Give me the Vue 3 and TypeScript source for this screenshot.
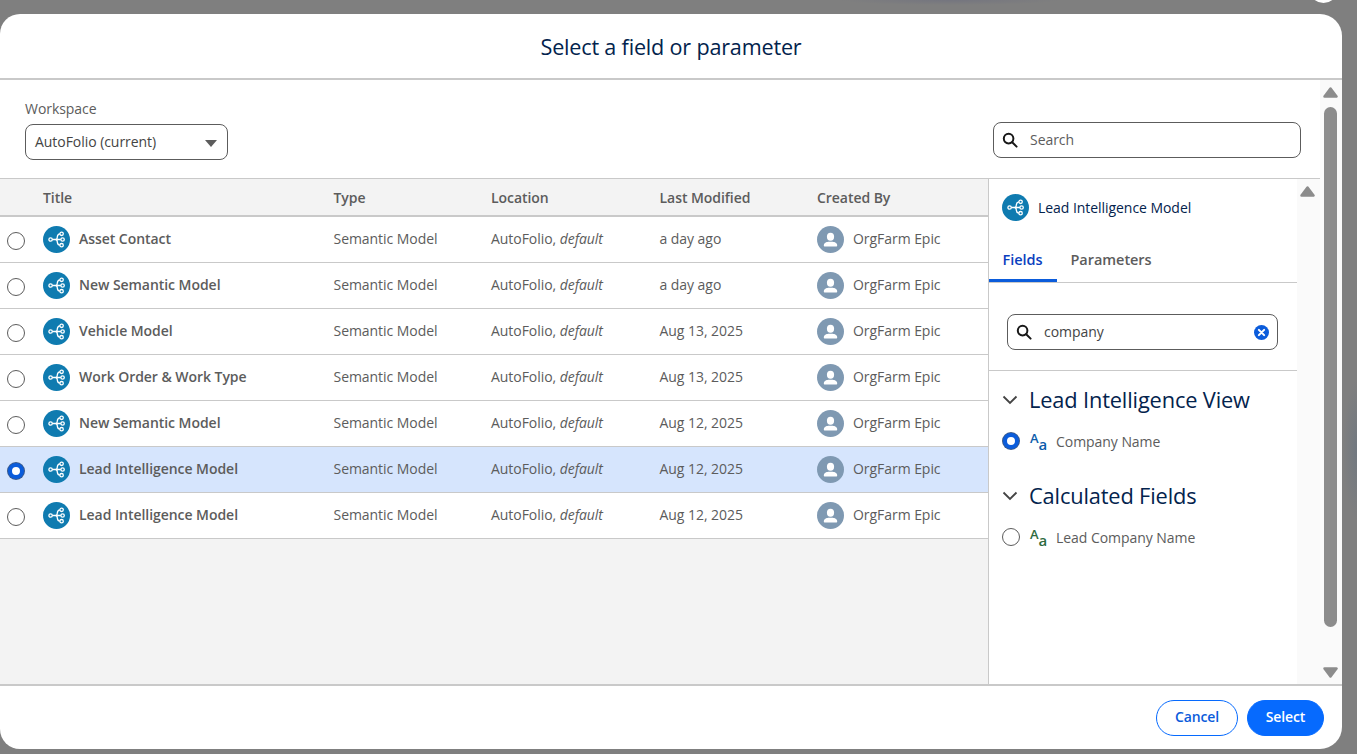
<template>
  <div class="page">
    <span class="close-peek"></span>
    <div class="modal">
      <header class="modal__header">Select a field or parameter</header>

      <div class="modal__body">
        <div class="modal__content">
          <div class="toolbar">
            <div class="workspace">
              <div class="workspace__label">Workspace</div>
              <div class="select">
                <span>AutoFolio (current)</span>
                <span class="select__caret"></span>
              </div>
            </div>
            <div class="search search--top">
              <svg class="search__icon" viewBox="0 0 16 16">
                <circle cx="6.6" cy="6.6" r="4.8" />
                <path d="M10.2 10.2 14.6 14.6" />
              </svg>
              <span class="search__placeholder">Search</span>
            </div>
          </div>

          <div class="split">
            <div class="table">
              <div class="row row--head">
                <div class="cell cell--radio"></div>
                <div class="cell cell--title">Title</div>
                <div class="cell cell--type">Type</div>
                <div class="cell cell--location">Location</div>
                <div class="cell cell--modified">Last Modified</div>
                <div class="cell">Created By</div>
              </div>
              <div
                v-for="item in items"
                :key="item.id"
                class="row"
                :class="{ 'row--selected': item.id === selectedId }"
              >
                <div class="cell cell--radio">
                  <span class="radio" :class="{ 'radio--on': item.id === selectedId }"></span>
                </div>
                <div class="cell cell--title">
                  <svg class="model-icon" viewBox="0 0 27 27">
                    <circle cx="13.5" cy="13.5" r="13.5" fill="#0f7bb0" />
                    <g fill="none" stroke="#fff" stroke-width="1.3">
                      <circle cx="7.6" cy="13.5" r="1.7" />
                      <circle cx="18.6" cy="7.8" r="1.7" />
                      <circle cx="19.6" cy="13.5" r="1.7" />
                      <circle cx="18.6" cy="19.2" r="1.7" />
                      <path d="M9.3 13.5h8.6M16.9 7.8c-2.6.4-2.4 2.2-2.6 3.4-.1 1-.3 2.3-1.9 2.3 1.6 0 1.8 1.3 1.9 2.3.2 1.2 0 3 2.6 3.4" />
                    </g>
                  </svg>
                  <span class="title-text">{{ item.title }}</span>
                </div>
                <div class="cell cell--type">Semantic Model</div>
                <div class="cell cell--location">AutoFolio,&nbsp;<em>default</em></div>
                <div class="cell cell--modified">{{ item.modified }}</div>
                <div class="cell">
                  <svg class="avatar" viewBox="0 0 27 27">
                    <circle cx="13.5" cy="13.5" r="13.5" fill="#7f99b2" />
                    <ellipse cx="13.5" cy="10.8" rx="3.6" ry="4" fill="#fff" />
                    <path d="M6.8 19.5c0-2.6 2.8-3.4 4.4-3.7h4.6c1.6.3 4.4 1.1 4.4 3.7 0 .6-.4 1-1 1H7.8c-.6 0-1-.4-1-1z" fill="#fff" />
                  </svg>
                  <span>OrgFarm Epic</span>
                </div>
              </div>
            </div>

            <aside class="panel">
              <div class="panel__main">
                <div class="panel__title">
                  <svg class="model-icon" viewBox="0 0 27 27">
                    <circle cx="13.5" cy="13.5" r="13.5" fill="#0f7bb0" />
                    <g fill="none" stroke="#fff" stroke-width="1.3">
                      <circle cx="7.6" cy="13.5" r="1.7" />
                      <circle cx="18.6" cy="7.8" r="1.7" />
                      <circle cx="19.6" cy="13.5" r="1.7" />
                      <circle cx="18.6" cy="19.2" r="1.7" />
                      <path d="M9.3 13.5h8.6M16.9 7.8c-2.6.4-2.4 2.2-2.6 3.4-.1 1-.3 2.3-1.9 2.3 1.6 0 1.8 1.3 1.9 2.3.2 1.2 0 3 2.6 3.4" />
                    </g>
                  </svg>
                  <span>Lead Intelligence Model</span>
                </div>
                <div class="tabs">
                  <div class="tab tab--active">Fields</div>
                  <div class="tab">Parameters</div>
                </div>
                <div class="panel__search">
                  <div class="search search--panel">
                    <svg class="search__icon" viewBox="0 0 16 16">
                      <circle cx="6.6" cy="6.6" r="4.8" />
                      <path d="M10.2 10.2 14.6 14.6" />
                    </svg>
                    <span class="search__value">company</span>
                    <svg class="search__clear" viewBox="0 0 16 16">
                      <circle cx="8" cy="8" r="8" fill="#0b5cdb" />
                      <path d="M5.2 5.2 10.8 10.8M10.8 5.2 5.2 10.8" stroke="#fff" stroke-width="2.2" stroke-linecap="round" />
                    </svg>
                  </div>
                </div>
                <section v-for="group in groups" :key="group.name" class="group">
                  <h3 class="group__name">
                    <svg class="group__chevron" viewBox="0 0 16 10">
                      <path d="M1.5 1.5 8 8l6.5-6.5" />
                    </svg>
                    {{ group.name }}
                  </h3>
                  <div class="field">
                    <span class="radio" :class="{ 'radio--on': group.selected }"></span>
                    <span class="field__type" :style="{ color: group.color }">
                      <span class="field__big">A</span><span class="field__small">a</span>
                    </span>
                    <span class="field__name">{{ group.field }}</span>
                  </div>
                </section>
              </div>
              <div class="panel__scroll">
                <svg class="arrow" viewBox="0 0 15 11"><path d="M7.5 1.5 13.5 9.5H1.5z" /></svg>
              </div>
            </aside>
          </div>
        </div>

        <div class="scrollbar">
          <svg class="arrow" viewBox="0 0 15 11"><path d="M7.5 1.5 13.5 9.5H1.5z" /></svg>
          <span class="scrollbar__thumb"></span>
          <svg class="arrow" viewBox="0 0 15 11"><path d="M7.5 9.5 13.5 1.5H1.5z" /></svg>
        </div>
      </div>

      <footer class="modal__footer">
        <button class="btn btn--outline" type="button">Cancel</button>
        <button class="btn btn--brand" type="button">Select</button>
      </footer>
    </div>
  </div>
</template>

<script setup lang="ts">
interface Item {
  id: number
  title: string
  modified: string
}

const selectedId = 6

const items: Item[] = [
  { id: 1, title: 'Asset Contact', modified: 'a day ago' },
  { id: 2, title: 'New Semantic Model', modified: 'a day ago' },
  { id: 3, title: 'Vehicle Model', modified: 'Aug 13, 2025' },
  { id: 4, title: 'Work Order & Work Type', modified: 'Aug 13, 2025' },
  { id: 5, title: 'New Semantic Model', modified: 'Aug 12, 2025' },
  { id: 6, title: 'Lead Intelligence Model', modified: 'Aug 12, 2025' },
  { id: 7, title: 'Lead Intelligence Model', modified: 'Aug 12, 2025' },
]

const groups = [
  { name: 'Lead Intelligence View', field: 'Company Name', color: '#0b5cab', selected: true },
  { name: 'Calculated Fields', field: 'Lead Company Name', color: '#2e6b3f', selected: false },
]
</script>

<style>
html,
body {
  margin: 0;
  background: #7f7f7f;
}
</style>

<style scoped>
* {
  box-sizing: border-box;
}

.page {
  position: relative;
  width: 1357px;
  height: 754px;
  padding-top: 14px;
  overflow: hidden;
  background:
    radial-gradient(ellipse 14px 70px at 1357px 450px, #717880, transparent),
    radial-gradient(ellipse 110px 5px at 950px 0, #74757f, transparent),
    #7f7f7f;
  font-family: "Open Sans", "Noto Sans", sans-serif;
  font-size: 14px;
  letter-spacing: -0.05px;
  color: #5c5c5c;
}

.close-peek {
  position: absolute;
  left: 1309px;
  top: -26px;
  width: 29px;
  height: 29px;
  border-radius: 50%;
  background: #fff;
}

.modal {
  display: flex;
  flex-direction: column;
  width: 1342px;
  height: 735px;
  border-radius: 20px 22px 22px 20px;
  overflow: hidden;
  background: #fff;
}

.modal__header {
  flex: 0 0 66px;
  display: flex;
  align-items: center;
  justify-content: center;
  border-bottom: 2px solid #c9c9c9;
  font-size: 21.6px;
  letter-spacing: -0.19px;
  color: #03234d;
}

.modal__body {
  flex: 1;
  display: flex;
  min-height: 0;
}

.modal__content {
  flex: 1;
  display: flex;
  flex-direction: column;
  min-width: 0;
}

.toolbar {
  flex: 0 0 98px;
  display: flex;
  justify-content: space-between;
  padding: 20px 19px 0 25px;
}

.workspace__label {
  line-height: 18px;
  margin-bottom: 6px;
}

.select {
  display: flex;
  align-items: center;
  justify-content: space-between;
  width: 203px;
  height: 36px;
  padding: 0 10px 2px 9px;
  border: 1px solid #5c5c5c;
  border-radius: 8px;
  color: #444;
}

.select__caret {
  width: 0;
  height: 0;
  margin-top: 5px;
  border-left: 6.5px solid transparent;
  border-right: 6.5px solid transparent;
  border-top: 7px solid #5c5c5c;
}

.search {
  display: flex;
  align-items: center;
  height: 36px;
  border: 1px solid #5c5c5c;
  border-radius: 8px;
  background: #fff;
}

.search--top {
  width: 308px;
  margin-top: 22px;
  padding-left: 8px;
}

.search--panel {
  width: 271px;
  padding: 0 8px 0 8px;
}

.search__icon {
  flex: none;
  width: 16px;
  height: 16px;
  margin-right: 12px;
  fill: none;
  stroke: #181818;
  stroke-width: 2;
  stroke-linecap: round;
}

.search__placeholder {
  margin-top: -2px;
  color: #5c5c5c;
}

.search__value {
  flex: 1;
  margin-top: -2px;
  color: #444;
}

.search__clear {
  width: 15px;
  height: 15px;
  margin-top: 1px;
}

.split {
  flex: 1;
  display: flex;
  min-height: 0;
  border-top: 1px solid #c9c9c9;
}

.table {
  flex: 0 0 989px;
  border-right: 1px solid #c9c9c9;
  background: #f3f3f3;
}

.row {
  display: flex;
  align-items: center;
  height: 46px;
  border-bottom: 1px solid #c9c9c9;
  background: #fff;
}

.row > .cell {
  height: 44px;
  line-height: 18px;
  padding-bottom: 2px;
}

.row > .cell--radio {
  padding-bottom: 0;
  padding-top: 3px;
}

.row--head > .cell {
  height: auto;
  padding-top: 2px;
  padding-bottom: 0;
}

.row--head {
  height: 38px;
  border-bottom-width: 2px;
  background: #f3f3f3;
  font-weight: 600;
}

.row--selected {
  background: #d6e5fd;
}

.cell {
  display: flex;
  align-items: center;
  white-space: nowrap;
}

.cell--radio {
  flex: 0 0 43px;
  padding-left: 7px;
}

.cell--title {
  flex: 0 0 290.5px;
}

.cell--type {
  flex: 0 0 157.5px;
}

.cell--location {
  flex: 0 0 168.5px;
}

.cell--modified {
  flex: 0 0 157.5px;
}

.model-icon {
  flex: none;
  width: 27px;
  height: 27px;
}

.cell .model-icon,
.cell .avatar {
  margin-top: 2px;
}

.title-text {
  margin-left: 9px;
  font-weight: 600;
}

.avatar {
  flex: none;
  width: 27px;
  height: 27px;
  margin-right: 9px;
}

.radio {
  flex: none;
  display: block;
  width: 18px;
  height: 18px;
  border: 1px solid #5c5c5c;
  border-radius: 50%;
  background: #fff;
}

.radio--on {
  border: 4px solid #0b5cdb;
  box-shadow: 0 0 0 1px #3a5a8c;
  width: 16px;
  height: 16px;
  margin: 1px;
}

.panel {
  flex: 1;
  display: flex;
  min-width: 0;
}

.panel__main {
  flex: 0 0 308px;
  min-width: 0;
}

.panel__scroll {
  flex: 1;
  display: flex;
  justify-content: center;
  padding: 7px 3px 0 0;
  background: #fafafa;
}

.panel__title {
  display: flex;
  align-items: center;
  height: 56px;
  padding-left: 13px;
  color: #03234d;
}

.panel__title .model-icon {
  margin-right: 9px;
}

.tabs {
  display: flex;
  height: 48px;
  align-items: flex-end;
  border-bottom: 1px solid #c9c9c9;
}

.tab {
  display: flex;
  align-items: center;
  height: 47px;
  padding: 2px 13.5px 0;
  font-size: 14.5px;
  font-weight: 600;
}

.tab--active {
  width: 68px;
  border-bottom: 3px solid #0b5cdb;
  padding-top: 5px;
  color: #0b3fc0;
}

.panel__search {
  height: 88px;
  padding: 31px 0 0 18px;
  border-bottom: 1px solid #c9c9c9;
}

.group {
  padding: 14px 0 0 13px;
  height: 96px;
}

.group__name {
  display: flex;
  align-items: center;
  margin: 0;
  font-size: 21.8px;
  font-weight: 400;
  line-height: 30px;
  letter-spacing: -0.15px;
  color: #03234d;
}

.group__chevron {
  width: 16px;
  height: 10px;
  margin-right: 11px;
  fill: none;
  stroke: #444;
  stroke-width: 1.8;
}

.field {
  display: flex;
  align-items: center;
  margin-top: 16px;
  height: 20px;
}

.field__type {
  display: inline-flex;
  width: 18px;
  margin: 0 8px 0 10px;
  font-weight: 600;
  line-height: 1;
}

.field__big {
  font-size: 13px;
  transform: translateY(-2px);
}

.field__small {
  font-size: 15px;
  transform: translateY(3px);
}

.arrow {
  flex: none;
  width: 15px;
  height: 11px;
  fill: #8c8c8c;
  stroke: #8c8c8c;
  stroke-width: 2.5;
  stroke-linejoin: round;
}

.scrollbar {
  flex: 0 0 22px;
  display: flex;
  flex-direction: column;
  align-items: center;
  padding: 7px 1px 6px 0;
  background: #fafafa;
}

.scrollbar__thumb {
  width: 13px;
  height: 520px;
  margin: 9px 0 auto;
  border-radius: 7px;
  background: #8c8c8c;
}

.modal__footer {
  flex: 0 0 65px;
  display: flex;
  align-items: center;
  justify-content: flex-end;
  gap: 9px;
  padding-right: 18px;
  border-top: 2px solid #c9c9c9;
}

.btn {
  height: 36px;
  padding: 0 0 2px;
  border-radius: 18px;
  font-family: inherit;
  font-size: 14px;
  font-weight: 600;
  letter-spacing: -0.1px;
}

.btn--outline {
  width: 82px;
  border: 1px solid #066afe;
  background: #fff;
  color: #0b5cdb;
}

.btn--brand {
  width: 77px;
  border: 1px solid #066afe;
  background: #066afe;
  color: #fff;
}

em {
  font-style: italic;
}
</style>
